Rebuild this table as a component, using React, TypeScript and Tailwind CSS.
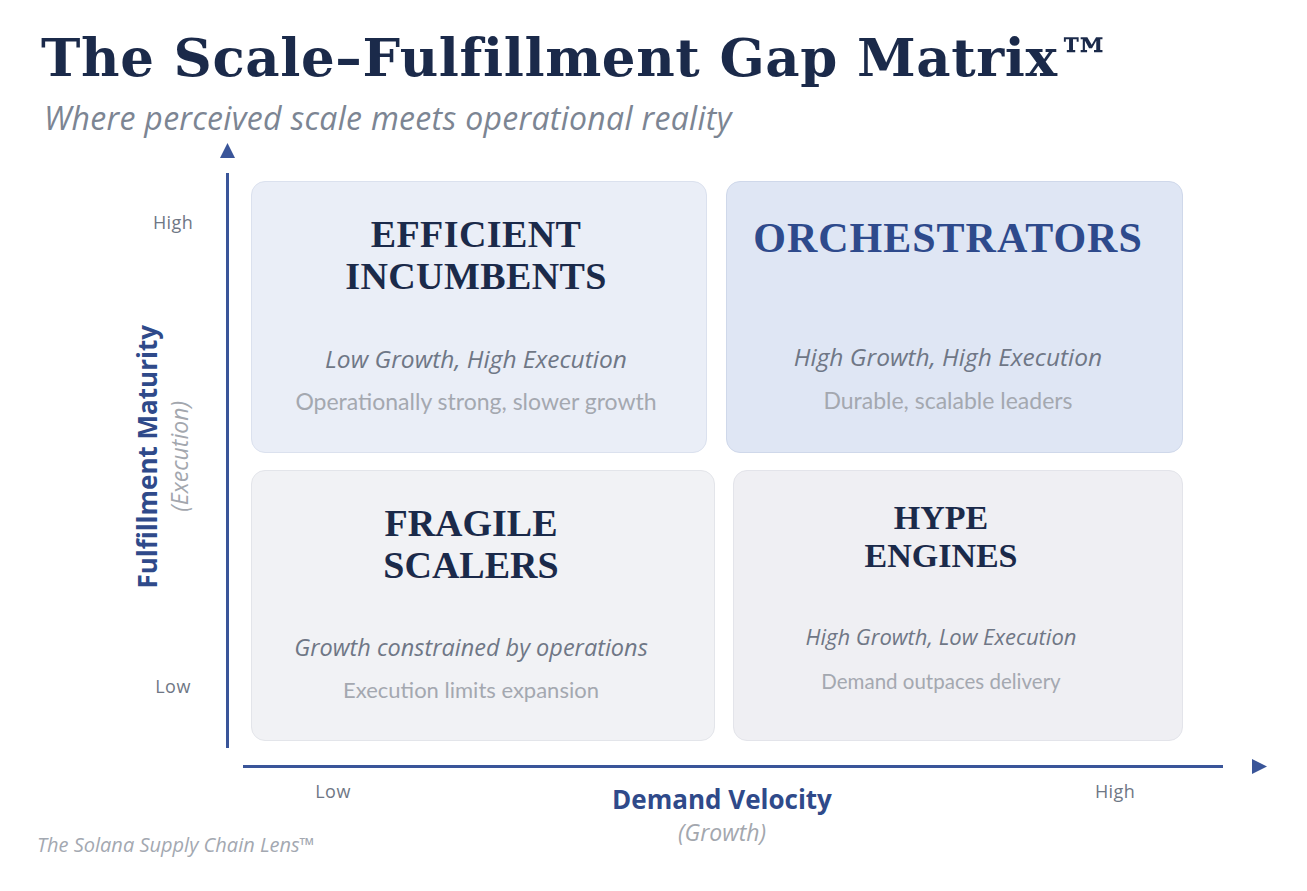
export default function App() {
  const sans = "font-['Lato','Open_Sans',sans-serif]";
  const open = "font-['Open_Sans','Lato',sans-serif]";
  const serif = "font-['Liberation_Serif','Times_New_Roman',serif]";
  return (
    <div className={`w-[1307px] h-[891px] bg-white flex flex-col overflow-hidden ${sans}`}>
      <header className="pl-[41px] pt-[27px]">
        <h1 className="font-['DejaVu_Serif',Georgia,serif] font-bold text-[53px] leading-[60px] text-[#1b2a4a] tracking-[0.6px] whitespace-nowrap">
          The Scale–Fulfillment Gap Matrix™
        </h1>
        <p className={`mt-[15px] pl-[3px] italic text-[32px] leading-[32px] tracking-[0.3px] text-[#7c8593] whitespace-nowrap ${open}`}>
          Where perceived scale meets operational reality
        </p>
      </header>

      <div className="mt-[9px] flex">
        {/* Y axis labels */}
        <div className="w-[212px] h-[607px] grid">
          <div className={`col-start-1 row-start-1 flex flex-col pt-[69px] pl-[133px] w-[212px] ${open}`}>
            <span className="w-[80px] text-center text-[18px] leading-[20px] tracking-[0.4px] text-[#6f7785]">High</span>
            <span className="mt-[444px] w-[80px] text-center text-[18px] leading-[20px] tracking-[0.5px] text-[#6f7785]">Low</span>
          </div>
          <div className={`col-start-1 row-start-1 flex items-center pl-[133px] pt-[20px] ${open}`}>
            <div className="flex items-center gap-[6px]">
              <span className="[writing-mode:vertical-rl] rotate-180 font-bold text-[26px] leading-[28px] text-[#2f4a8a] whitespace-nowrap">
                Fulfillment Maturity
              </span>
              <span className="[writing-mode:vertical-rl] rotate-180 italic text-[23px] leading-[24px] text-[#a3a7ae] whitespace-nowrap">
                (Execution)
              </span>
            </div>
          </div>
        </div>

        {/* Y axis line */}
        <div className="w-[30px] flex flex-col items-center">
          <svg width="15" height="15" viewBox="0 0 15 15">
            <polygon points="7.5,0 15,15 0,15" fill="#3a5599" />
          </svg>
          <div className="mt-[15px] w-[3px] h-[575px] bg-[#3a5599]" />
        </div>

        {/* Cards */}
        <div className="ml-[9px] mt-[38px] flex flex-col">
          <div className="flex">
            <div className="w-[456px] h-[272px] rounded-[14px] border border-[#dbe1ee] bg-[#eaeef7] flex flex-col items-center pt-[31px] pr-[6px]">
              <div className={`${serif} font-bold text-[38px] leading-[42px] tracking-[0.4px] text-[#1b2a4a] text-center`}>
                EFFICIENT<br />INCUMBENTS
              </div>
              <div className={`mt-[48px] italic text-[24.5px] leading-[28px] text-[#6f7786] whitespace-nowrap ${open}`}>Low Growth, High Execution</div>
              <div className="mt-[14px] text-[23px] leading-[28px] text-[#a4a8b0] whitespace-nowrap">Operationally strong, slower growth</div>
            </div>
            <div className="ml-[19px] w-[457px] h-[272px] rounded-[14px] border border-[#cfd8ea] bg-[#dfe6f4] flex flex-col items-center pt-[34px] pr-[13px]">
              <div className={`${serif} font-bold text-[42px] leading-[44px] tracking-[1px] text-[#2e4a8c] text-center`}>
                ORCHESTRATORS
              </div>
              <div className={`mt-[83px] italic text-[24.5px] leading-[28px] text-[#6f7786] whitespace-nowrap ${open}`}>High Growth, High Execution</div>
              <div className="mt-[15px] text-[23px] leading-[28px] text-[#a4a8b0] whitespace-nowrap">Durable, scalable leaders</div>
            </div>
          </div>
          <div className="mt-[17px] flex">
            <div className="w-[464px] h-[271px] rounded-[14px] border border-[#e3e5ea] bg-[#f1f2f5] flex flex-col items-center pt-[31px] pr-[24px]">
              <div className={`${serif} font-bold text-[38px] leading-[42px] text-[#1b2a4a] text-center`}>
                FRAGILE<br />SCALERS
              </div>
              <div className={`mt-[47px] italic text-[23.5px] leading-[28px] text-[#6f7786] whitespace-nowrap ${open}`}>Growth constrained by operations</div>
              <div className="mt-[15px] text-[22px] leading-[28px] text-[#a4a8b0] whitespace-nowrap">Execution limits expansion</div>
            </div>
            <div className="ml-[18px] w-[450px] h-[271px] rounded-[14px] border border-[#e3e4ea] bg-[#efeff3] flex flex-col items-center pt-[28px] pr-[34px]">
              <div className={`${serif} font-bold text-[34px] leading-[38px] text-[#1b2a4a] text-center`}>
                HYPE<br />ENGINES
              </div>
              <div className={`mt-[47px] italic text-[22px] leading-[28px] text-[#6f7786] whitespace-nowrap ${open}`}>High Growth, Low Execution</div>
              <div className="mt-[17px] text-[20.5px] leading-[28px] text-[#a4a8b0] whitespace-nowrap">Demand outpaces delivery</div>
            </div>
          </div>
        </div>
      </div>

      {/* X axis */}
      <div className="mt-[9px] pl-[243px] flex items-center">
        <div className="w-[980px] h-[3px] bg-[#3a5599]" />
        <svg className="ml-[29px]" width="15" height="15" viewBox="0 0 15 15">
          <polygon points="0,0 15,7.5 0,15" fill="#3a5599" />
        </svg>
      </div>

      {/* X labels + footer */}
      <div className={`mt-[4px] flex ${open}`}>
        <div className="w-[293px] pl-[37px] pt-[56px]">
          <span className="italic text-[20px] leading-[20px] text-[#a3a8b1] whitespace-nowrap">The Solana Supply Chain Lens™</span>
        </div>
        <div className="w-[80px] pt-[3px] text-center text-[18px] leading-[20px] tracking-[0.5px] text-[#6f7785]">Low</div>
        <div className="ml-[229px] w-[240px] pt-[7px] flex flex-col items-center">
          <span className="font-bold text-[26px] leading-[28px] text-[#2f4a8a] whitespace-nowrap">Demand Velocity</span>
          <span className="mt-[7px] italic text-[23px] leading-[24px] text-[#a3a7ae]">(Growth)</span>
        </div>
        <div className="ml-[233px] w-[80px] pt-[3px] text-center text-[18px] leading-[20px] tracking-[0.4px] text-[#6f7785]">High</div>
      </div>
    </div>
  );
}
